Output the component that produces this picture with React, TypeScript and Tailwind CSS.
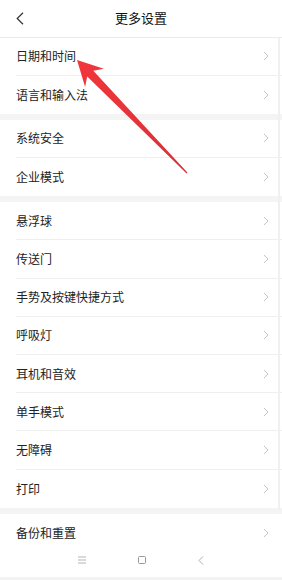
import React from "react";

const groups: string[][] = [
  ["日期和时间", "语言和输入法"],
  ["系统安全", "企业模式"],
  ["悬浮球", "传送门", "手势及按键快捷方式", "呼吸灯", "耳机和音效", "单手模式", "无障碍", "打印"],
  ["备份和重置"],
];

function Chevron() {
  return (
    <svg width="6" height="10" viewBox="0 0 6 10" fill="none">
      <path d="M1 1 L5 5 L1 9" stroke="#c4c4c4" strokeWidth="1" />
    </svg>
  );
}

function Row({ label, last }: { label: string; last: boolean }) {
  return (
    <div className="h-[38.2px] flex items-center pl-4 relative">
      <div className={`flex-1 h-full flex items-center pr-[13px] ${last ? "" : "border-b border-[#efefef]"}`}>
        <span className="flex-1 text-[12px] text-[#222] leading-none">{label}</span>
        <Chevron />
      </div>
    </div>
  );
}

export default function App() {
  const T = [77, 60];
  const u = [0.6975, 0.7166];
  const n = [0.7166, -0.6975];
  const pt = (a: number, b: number) => `${(T[0] + a * u[0] + b * n[0]).toFixed(1)},${(T[1] + a * u[1] + b * n[1]).toFixed(1)}`;
  const arrow = [pt(0, 0), pt(25, 13), pt(19, 4.2), pt(157.7, 0.6), pt(157.7, -0.6), pt(19, -4.2), pt(25, -13)].join(" ");

  return (
    <div
      className="w-[282px] h-[580px] bg-white flex flex-col relative overflow-hidden"
      style={{ fontFamily: '"Noto Sans CJK SC", "Noto Sans", sans-serif' }}
    >
      <div className="h-[37.5px] shrink-0 flex items-center border-b border-[#ececec] relative">
        <div className="w-[44px] flex items-center pl-4">
          <svg width="8" height="13" viewBox="0 0 8 13" fill="none">
            <path d="M7 0.8 L1.2 6.5 L7 12.2" stroke="#333" strokeWidth="1.2" />
          </svg>
        </div>
        <div className="flex-1 text-center text-[13px] text-[#111] pr-[44px] pb-[2px]">更多设置</div>
      </div>
      <div className="flex-1 overflow-hidden">
        {groups.map((g, gi) => (
          <div key={gi}>
            {gi > 0 && <div className="h-[6px] bg-[#f4f4f4]" />}
            {g.map((label, i) => (
              <Row key={label} label={label} last={i === g.length - 1} />
            ))}
          </div>
        ))}
      </div>
      <div className="absolute left-0 right-0 bottom-0 h-[37px] bg-white flex flex-col">
        <div className="flex-1 flex items-center">
          <div className="w-[160px] mx-auto flex items-center justify-between px-[17px]">
            <svg width="8" height="8" viewBox="0 0 8 8" fill="none">
              <path d="M0 1 H8 M0 4 H8 M0 7 H8" stroke="#aaa" strokeWidth="0.9" />
            </svg>
            <svg width="8" height="8" viewBox="0 0 8 8" fill="none">
              <rect x="0.5" y="0.5" width="7" height="7" rx="1.2" stroke="#999" strokeWidth="1" />
            </svg>
            <svg width="6" height="9" viewBox="0 0 6 9" fill="none">
              <path d="M5 0.5 L1 4.5 L5 8.5" stroke="#aaa" strokeWidth="1" />
            </svg>
          </div>
        </div>
        <div className="h-[3px] bg-[#f3f3f3]" />
      </div>
      <div className="absolute right-[2px] top-[38px] h-[472px] w-[2px] bg-[#f0f0f0]" />
      <svg className="absolute left-0 top-0 pointer-events-none" width="282" height="580">
        <defs>
          <linearGradient id="ar" x1="77" y1="60" x2="187" y2="173" gradientUnits="userSpaceOnUse">
            <stop offset="0" stopColor="#f2363c" />
            <stop offset="1" stopColor="#d83036" />
          </linearGradient>
        </defs>
        <polygon points={arrow} fill="url(#ar)" />
      </svg>
    </div>
  );
}
